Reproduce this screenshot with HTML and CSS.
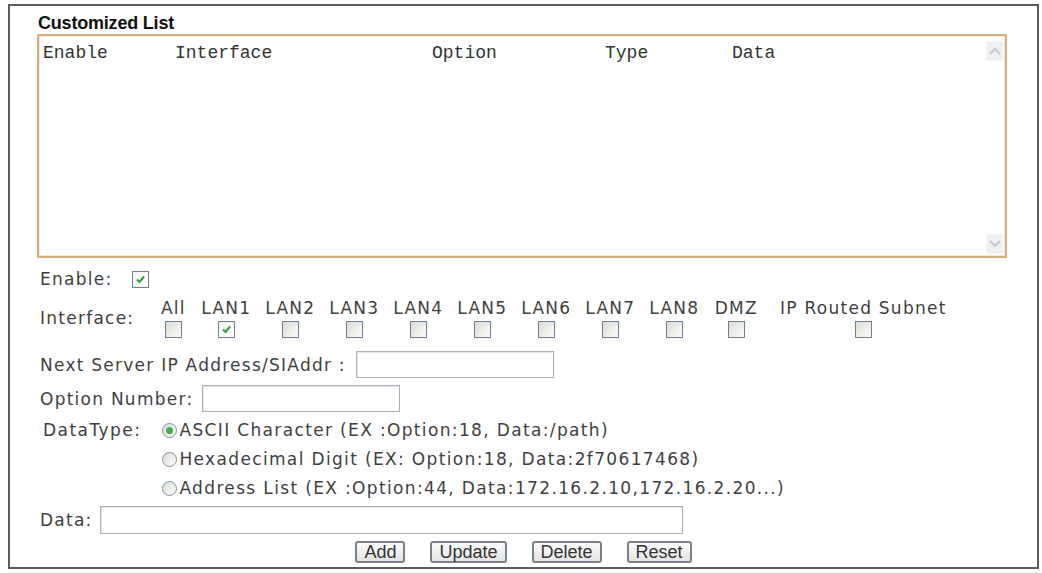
FILE: index.html
```html
<!DOCTYPE html>
<html lang="en">
<head>
    <meta charset="UTF-8">
    <title>Customized List</title>
    <link rel="stylesheet" href="styles.css">
</head>
<body>
    <div class="dhcp-frame">
        <h2 class="list-title">Customized List</h2>

        <div class="list-box">
            <div class="list-head">
                <span class="col-enable">Enable</span>
                <span class="col-iface">Interface</span>
                <span class="col-option">Option</span>
                <span class="col-type">Type</span>
                <span class="col-data">Data</span>
            </div>
            <div class="scroll-bar">
                <span class="scroll-btn">
                    <svg width="12" height="8" viewBox="0 0 12 8"><path d="M1 7 L6 2 L11 7" fill="none" stroke="#c3cad2" stroke-width="2"/></svg>
                </span>
                <span class="scroll-btn">
                    <svg width="12" height="8" viewBox="0 0 12 8"><path d="M1 1 L6 6 L11 1" fill="none" stroke="#c3cad2" stroke-width="2"/></svg>
                </span>
            </div>
        </div>

        <div class="form-row enable-row">
            <span class="field-label">Enable:</span>
            <span class="cb checked enable-cb">
                <svg width="11" height="11" viewBox="0 0 11 11"><path d="M2 5.5 L4.5 8 L9 2.5" fill="none" stroke="#2ea336" stroke-width="2"/></svg>
            </span>
        </div>

        <div class="form-row iface-row">
            <span class="field-label">Interface:</span>
            <div class="iface-grid">
                <span class="iface-name">All</span>
                <span class="iface-name">LAN1</span>
                <span class="iface-name">LAN2</span>
                <span class="iface-name">LAN3</span>
                <span class="iface-name">LAN4</span>
                <span class="iface-name">LAN5</span>
                <span class="iface-name">LAN6</span>
                <span class="iface-name">LAN7</span>
                <span class="iface-name">LAN8</span>
                <span class="iface-name">DMZ</span>
                <span class="iface-name">IP Routed Subnet</span>

                <span class="cb-cell"><span class="cb"></span></span>
                <span class="cb-cell"><span class="cb checked">
                    <svg width="11" height="11" viewBox="0 0 11 11"><path d="M2 5.5 L4.5 8 L9 2.5" fill="none" stroke="#2ea336" stroke-width="2"/></svg>
                </span></span>
                <span class="cb-cell"><span class="cb"></span></span>
                <span class="cb-cell"><span class="cb"></span></span>
                <span class="cb-cell"><span class="cb"></span></span>
                <span class="cb-cell"><span class="cb"></span></span>
                <span class="cb-cell"><span class="cb"></span></span>
                <span class="cb-cell"><span class="cb"></span></span>
                <span class="cb-cell"><span class="cb"></span></span>
                <span class="cb-cell"><span class="cb"></span></span>
                <span class="cb-cell"><span class="cb"></span></span>
            </div>
        </div>

        <div class="form-row server-row">
            <span class="field-label">Next Server IP Address/SIAddr :</span>
            <span class="text-input short-input"></span>
        </div>

        <div class="form-row option-row">
            <span class="field-label">Option Number:</span>
            <span class="text-input short-input"></span>
        </div>

        <div class="form-row type-row">
            <span class="field-label type-label">DataType:</span>
            <div class="radio-list">
                <div class="radio-item"><span class="radio selected"></span>ASCII Character (EX :Option:18, Data:/path)</div>
                <div class="radio-item"><span class="radio"></span>Hexadecimal Digit (EX: Option:18, Data:2f70617468)</div>
                <div class="radio-item"><span class="radio"></span>Address List (EX :Option:44, Data:172.16.2.10,172.16.2.20...)</div>
            </div>
        </div>

        <div class="form-row data-row">
            <span class="field-label">Data:</span>
            <span class="text-input long-input"></span>
        </div>

        <div class="button-row">
            <button class="btn">Add</button>
            <button class="btn">Update</button>
            <button class="btn">Delete</button>
            <button class="btn">Reset</button>
        </div>
    </div>
</body>
</html>
```

FILE: styles.css
```css
* {
    margin: 0;
    padding: 0;
    box-sizing: border-box;
}

body {
    background-color: #fff;
    font-family: 'DejaVu Sans', Verdana, sans-serif;
    color: #3f3f3f;
}

.dhcp-frame {
    width: 1031px;
    height: 565px;
    margin: 4px 0 0 8px;
    border: 2px solid #5c5c5c;
    padding: 7px 0 0 0;
}

.list-title {
    font-family: 'Liberation Sans', Arial, sans-serif;
    font-size: 18px;
    line-height: 20px;
    font-weight: bold;
    color: #111;
    padding-left: 28px;
    letter-spacing: -0.2px;
}

.list-box {
    position: relative;
    width: 970px;
    height: 224px;
    margin: 1px 0 0 27px;
    border: 2px solid #d3b07e;
    box-shadow: inset 0 0 0 1px #f4e8cf;
    padding: 7px 0 0 4px;
}

.list-head {
    display: flex;
    font-family: 'Liberation Mono', 'Courier New', monospace;
    font-size: 18px;
    line-height: 20px;
    color: #333;
}

.col-enable { width: 132px; }
.col-iface { width: 257px; }
.col-option { width: 173px; }
.col-type { width: 127px; }

.scroll-bar {
    position: absolute;
    top: 5px;
    right: 1px;
    bottom: 2px;
    width: 18px;
    display: flex;
    flex-direction: column;
    justify-content: space-between;
}

.scroll-btn {
    height: 20px;
    display: flex;
    align-items: center;
    justify-content: center;
    background: #eef0f2;
    border: 1px solid #f6f7f8;
}

.form-row {
    display: flex;
    align-items: center;
    padding-left: 30px;
    font-size: 17px;
    line-height: 20px;
    letter-spacing: 1.25px;
}

.field-label {
    white-space: nowrap;
}

.cb {
    display: inline-flex;
    align-items: center;
    justify-content: center;
    width: 17px;
    height: 17px;
    border: 1px solid #6f7f93;
    background: linear-gradient(135deg, #dcdcd6, #fbfbf9);
}

.cb.checked {
    background: linear-gradient(135deg, #f3f3ef, #ffffff);
}

.enable-row {
    margin-top: 11px;
}

.enable-cb {
    margin-left: 20px;
}

.iface-row {
    margin-top: 9px;
}

.iface-grid {
    display: grid;
    grid-template-columns: 38px repeat(8, 60px) 56px 190px;
    column-gap: 4px;
    margin-left: 20px;
}

.iface-name {
    text-align: center;
    white-space: nowrap;
}

.cb-cell {
    display: flex;
    justify-content: center;
    margin-top: 3px;
}

.server-row {
    margin-top: 13px;
}

.text-input {
    display: inline-block;
    height: 27px;
    border: 1px solid #a9b0b8;
    box-shadow: inset 1px 1px 0 #e4e7ea;
    background: #fff;
}

.short-input {
    width: 198px;
    margin-left: 10px;
}

.option-row {
    margin-top: 7px;
}

.option-row .short-input {
    margin-left: 9px;
}

.type-row {
    align-items: flex-start;
    margin-top: 4px;
    padding-left: 33px;
    line-height: 29px;
    letter-spacing: 1.45px;
}

.radio-list {
    margin-left: 21px;
    letter-spacing: 1.35px;
}

.radio-item {
    display: flex;
    align-items: center;
    white-space: nowrap;
}

.radio {
    position: relative;
    width: 15px;
    height: 15px;
    margin-right: 2px;
    border: 1px solid #7d8ea3;
    border-radius: 50%;
    background: linear-gradient(135deg, #dcdcd6, #fbfbf9);
}

.radio.selected::after {
    content: "";
    position: absolute;
    left: 3px;
    top: 3px;
    width: 7px;
    height: 7px;
    border-radius: 50%;
    background: #45ad45;
}

.data-row {
    margin-top: 3px;
}

.long-input {
    width: 583px;
    height: 28px;
    margin-left: 7px;
}

.button-row {
    display: flex;
    justify-content: center;
    gap: 25px;
    margin-top: 7px;
}

.btn {
    height: 22px;
    padding: 0 7px;
    font-family: 'Liberation Sans', Arial, sans-serif;
    font-size: 18px;
    line-height: 18px;
    color: #333;
    border: 2px solid #7b8189;
    border-radius: 3px;
    background: linear-gradient(#fbfbfb, #e4e4e4);
}
```
